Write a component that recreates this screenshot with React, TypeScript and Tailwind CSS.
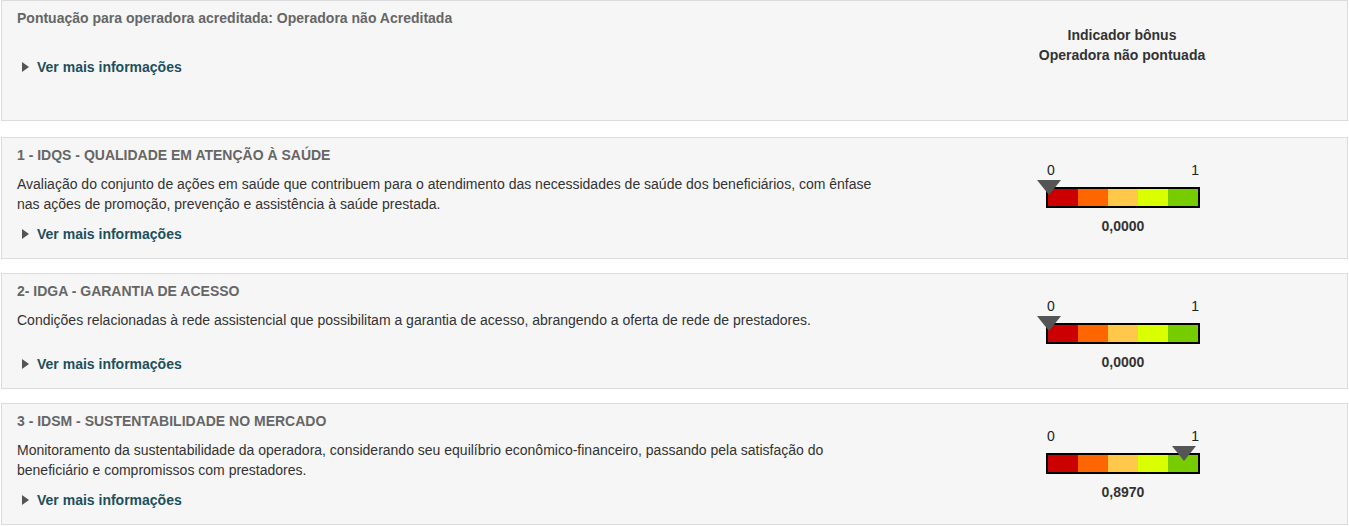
import React from "react";

type Indicador = {
  titulo: string;
  descricao: string;
  valor: number;
};

const indicadores: Indicador[] = [
  {
    titulo: "1 - IDQS - QUALIDADE EM ATENÇÃO À SAÚDE",
    descricao:
      "Avaliação do conjunto de ações em saúde que contribuem para o atendimento das necessidades de saúde dos beneficiários, com ênfase nas ações de promoção, prevenção e assistência à saúde prestada.",
    valor: 0,
  },
  {
    titulo: "2- IDGA - GARANTIA DE ACESSO",
    descricao:
      "Condições relacionadas à rede assistencial que possibilitam a garantia de acesso, abrangendo a oferta de rede de prestadores.",
    valor: 0,
  },
  {
    titulo: "3 - IDSM - SUSTENTABILIDADE NO MERCADO",
    descricao:
      "Monitoramento da sustentabilidade da operadora, considerando seu equilíbrio econômico-financeiro, passando pela satisfação do beneficiário e compromissos com prestadores.",
    valor: 0.897,
  },
];

const VerMais = () => (
  <button className="flex items-center text-[14px] leading-[20px] font-bold text-[#1e4f5c] pl-[5px]">
    {/* seta */}
    <svg width="7" height="10" viewBox="0 0 7 10" className="mr-[8px]">
      <path d="M0 0 L7 5 L0 10 Z" fill="#555" />
    </svg>
    Ver mais informações
  </button>
);

const Gauge = ({ valor }: { valor: number }) => {
  const cores = ["bg-[#cc0000]", "bg-[#ff6600]", "bg-[#ffc84a]", "bg-[#d9ff00]", "bg-[#77cc00]"];
  return (
    <div className="w-[154px] mt-[16px] flex flex-col text-[#222]">
      <div className="flex justify-between text-[14px] leading-[16px] px-[1px]">
        <span>0</span>
        <span>1</span>
      </div>
      <div className="relative mt-[9px] h-[21px] border-2 border-black flex">
        {cores.map((c) => (
          <div key={c} className={"flex-1 " + c} />
        ))}
        <svg
          width="24"
          height="15"
          viewBox="0 0 24 15"
          className="absolute top-[-9px]"
          style={{ left: `calc(${valor * 100}% - 11px)` }}
        >
          <path d="M0 0 L24 0 L12 15 Z" fill="#555" />
        </svg>
      </div>
      <div className="mt-[10px] text-center text-[14px] leading-[16px] font-bold text-[#333]">
        {valor.toFixed(4).replace(".", ",")}
      </div>
    </div>
  );
};

const App = () => {
  return (
    <div className="w-[1349px] px-px font-['Liberation_Sans',Arial,sans-serif] bg-white">
      {/* Cabeçalho da operadora */}
      <section className="h-[121px] border border-[#dcdcdc] bg-[#f6f6f6] pt-[8px] px-[15px] flex">
        <div className="w-[865px]">
          <h2 className="text-[14px] leading-[18px] font-bold text-[#666]">
            Pontuação para operadora acreditada: Operadora não Acreditada
          </h2>
          <div className="mt-[30px]">
            <VerMais />
          </div>
        </div>
        <div className="ml-auto mr-[60px] w-[300px] mt-[16px] text-center text-[14px] leading-[20px] font-bold text-[#333]">
          <p>Indicador bônus</p>
          <p>Operadora não pontuada</p>
        </div>
      </section>

      {indicadores.map((ind, i) => (
        <section
          key={ind.titulo}
          className={
            (i === 0 ? "mt-[16px] " : "mt-[14px] ") +
            "border border-[#dcdcdc] bg-[#f6f6f6] pt-[8px] pb-[14px] px-[15px] flex"
          }
        >
          <div className="w-[865px]">
            <h3 className="text-[14px] leading-[18px] font-bold text-[#666]">{ind.titulo}</h3>
            <p className="mt-[10px] min-h-[34px] text-[14px] leading-[20px] text-[#333]">
              {ind.descricao}
            </p>
            <div className="mt-[10px]">
              <VerMais />
            </div>
          </div>
          <div className="ml-auto mr-[132px]">
            <Gauge valor={ind.valor} />
          </div>
        </section>
      ))}
    </div>
  );
};

export default App;
